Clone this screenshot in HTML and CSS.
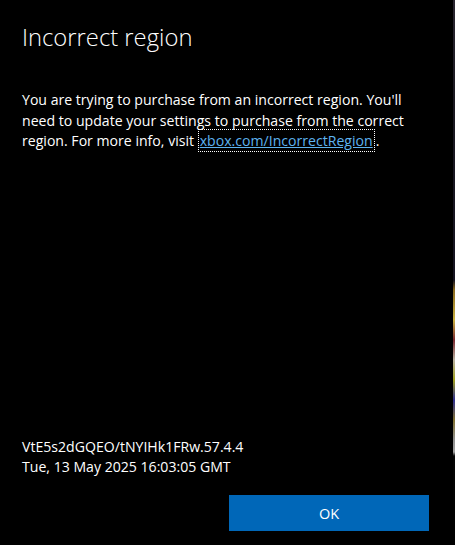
FILE: index.html
```html
<!DOCTYPE html>
<html>
<head>
<meta charset="utf-8">
<link rel="stylesheet" href="styles.css">
</head>
<body>
<div class="screen">
  <div class="dialog">
    <h1 class="title">Incorrect region</h1>
    <p class="message">You are trying to purchase from an incorrect region. You'll need to update your settings to purchase from the correct region. For more info, visit <a class="link" href="#">xbox.com/IncorrectRegion</a>.</p>
    <div class="spacer"></div>
    <div class="info">
      <div>VtE5s2dGQEO/tNYIHk1FRw.57.4.4</div>
      <div>Tue, 13 May 2025 16:03:05 GMT</div>
    </div>
    <div class="actions">
      <button class="ok">OK</button>
    </div>
  </div>
  <div class="backdrop"></div>
</div>
</body>
</html>
```
FILE: styles.css
```css
html, body {
  margin: 0;
  padding: 0;
  background: #000;
}
.screen {
  display: flex;
  width: 455px;
  height: 545px;
}
.dialog {
  width: 453px;
  height: 545px;
  box-sizing: border-box;
  padding: 21px 24px 14px 22px;
  display: flex;
  flex-direction: column;
  background: #000;
  color: #fff;
  font-family: "Open Sans", "Noto Sans", sans-serif;
}
.backdrop {
  width: 2px;
  height: 545px;
  background: linear-gradient(to bottom,
    #2a2630 0px, #1a1820 100px, #151320 280px,
    #8a6a20 290px, #c9b040 320px, #7a2a30 340px, #b8b0a0 360px,
    #a0a020 380px, #303090 400px, #807030 420px, #909090 440px, #a0a0a0 452px,
    #050505 456px, #000 545px);
}
.title {
  margin: 0;
  font-weight: 300;
  font-size: 23.8px;
  line-height: 32px;
}
.message {
  margin: 37px 0 0 0;
  font-size: 14.1px;
  line-height: 20.6px;
}
.link {
  color: #5eb3f0;
  text-decoration: underline;
  outline: 1px dotted #fff;
  outline-offset: 1px;
  margin-left: 2px;
  margin-right: 3px;
}
.spacer {
  flex: 1;
}
.info {
  font-size: 14.1px;
  line-height: 20px;
}
.actions {
  display: flex;
  justify-content: flex-end;
  margin-top: 18px;
}
.ok {
  width: 200px;
  height: 36px;
  border: none;
  background: #0067b8;
  color: #fff;
  font-family: "Open Sans", "Noto Sans", sans-serif;
  font-size: 14.5px;
  padding: 0;
}
```
